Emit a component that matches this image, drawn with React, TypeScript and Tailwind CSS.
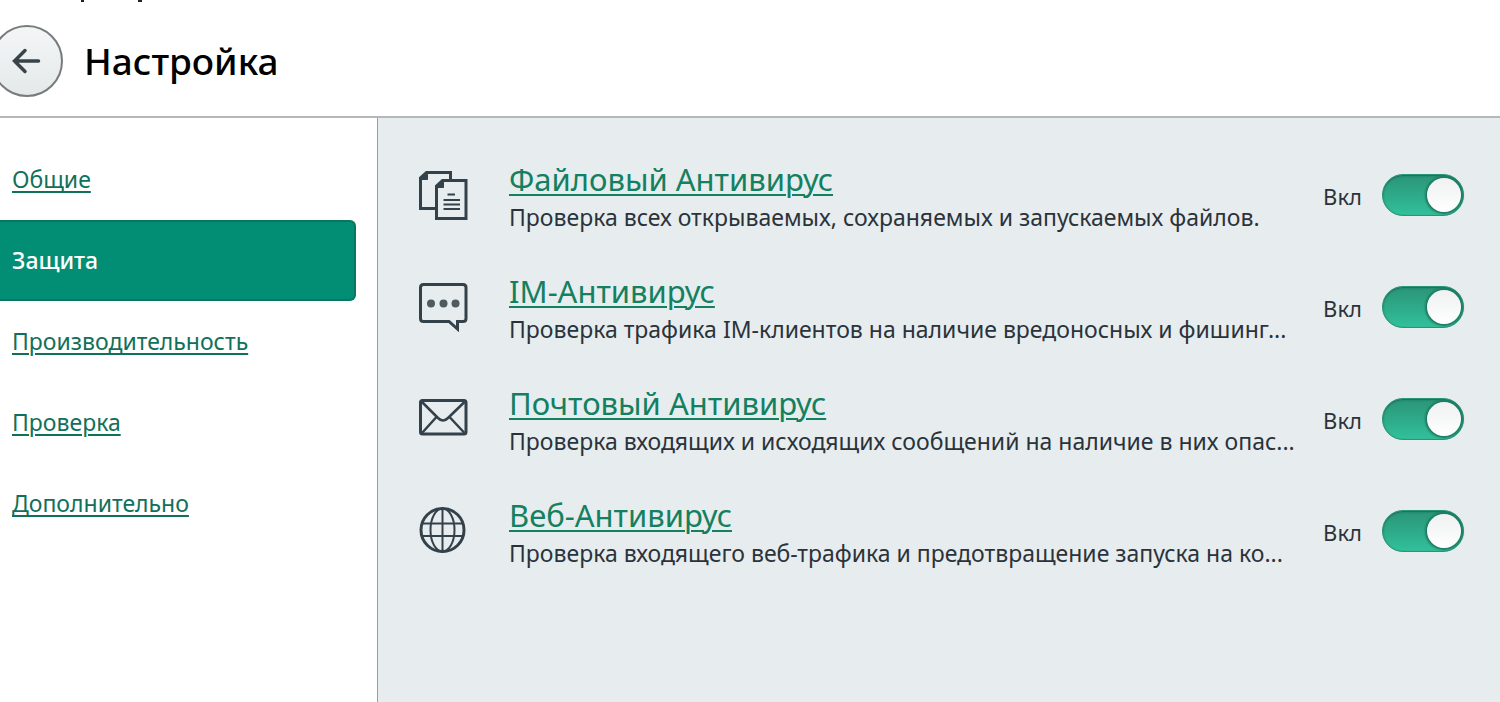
import React, { useState } from "react";

const TABS = ["Общие", "Защита", "Производительность", "Проверка", "Дополнительно"];

const FilesIcon = () => (
  <svg viewBox="0 0 50 50" className="w-[50px] h-[50px]" fill="none" stroke="currentColor" strokeWidth="3">
    <path d="M17 38.5H2.500V8L8.500 2.500H32.500V10" />
    <path d="M2 9.500H9.500V2Z" fill="currentColor" strokeWidth="1" />
    <path d="M18.500 16L24.500 10.500H48V48.500H18.500Z" />
    <path d="M18 17.500H25.500V10Z" fill="currentColor" strokeWidth="1" />
    <path d="M29.500 24.500H37M25.500 30H42M25.500 34.500H42M25.500 39H42" strokeWidth="2" />
  </svg>
);

const ChatIcon = () => (
  <svg viewBox="0 0 50 50" className="w-[50px] h-[50px]" fill="none" stroke="currentColor" strokeWidth="3">
    <path d="M5.500 2.500H45Q48 2.500 48 5.500V36.500Q48 39.500 45 39.500H39.500V47L31 39.500H5.500Q2.500 39.500 2.500 36.500V5.500Q2.500 2.500 5.500 2.500Z" />
    <g fill="#4f5b61" stroke="none">
      <circle cx="13" cy="21.500" r="4" />
      <circle cx="25.500" cy="21.500" r="4" />
      <circle cx="37.500" cy="21.500" r="4" />
    </g>
  </svg>
);

const MailIcon = () => (
  <svg viewBox="0 0 50 50" className="w-[50px] h-[50px]" fill="none" stroke="currentColor" strokeWidth="3">
    <rect x="2.500" y="6.500" width="45.500" height="33.500" rx="2" />
    <path d="M4 8L20 24Q25 29 30 24L46.500 8M4 39L18 23.500M46.500 39L32 23.500" strokeWidth="2.500" />
  </svg>
);

const GlobeIcon = () => (
  <svg viewBox="0 0 50 50" className="w-[50px] h-[50px]" fill="none" stroke="currentColor" strokeWidth="2">
    <circle cx="24.500" cy="24" r="21.500" strokeWidth="3" />
    <ellipse cx="24.500" cy="24" rx="12" ry="21.500" />
    <path d="M24.500 2V46M5 17.500H44M5 30H44" />
  </svg>
);

const COMPONENTS = [
  {
    id: "file",
    icon: <FilesIcon />,
    title: "Файловый Антивирус",
    text: "Проверка всех открываемых, сохраняемых и запускаемых файлов.",
  },
  {
    id: "im",
    icon: <ChatIcon />,
    title: "IM-Антивирус",
    text: "Проверка трафика IM-клиентов на наличие вредоносных и фишинг...",
  },
  {
    id: "mail",
    icon: <MailIcon />,
    title: "Почтовый Антивирус",
    text: "Проверка входящих и исходящих сообщений на наличие в них опас...",
  },
  {
    id: "web",
    icon: <GlobeIcon />,
    title: "Веб-Антивирус",
    text: "Проверка входящего веб-трафика и предотвращение запуска на ко...",
  },
];

const App = () => {
  const [activeTab, setActiveTab] = useState(1);
  const [enabled, setEnabled] = useState([true, true, true, true]);

  const toggle = (index: number) =>
    setEnabled(enabled.map((value, i) => (i === index ? !value : value)));

  return (
    <div className="min-h-screen flex flex-col bg-white font-['Noto_Sans',sans-serif] text-[#2b333a]">
      {/* Marks at the window's top edge */}
      <div className="h-[2px] flex gap-[54px] pl-[81px]">
        <span className="w-[3px] bg-[#222222]" />
        <span className="w-1 bg-[#222222]" />
      </div>

      {/* Header */}
      <header className="h-[116px] flex items-center gap-[21px] pt-1 border-b-2 border-[#b4b8ba]">
        <button
          aria-label="Назад"
          className="w-[72px] h-[72px] -ml-[9px] rounded-full border-2 border-[#777b7d] bg-linear-to-b from-[#f4f6f6] to-[#e4e9ea] flex items-center justify-center"
        >
          <svg viewBox="0 0 30 26" className="w-[30px] h-[26px]" fill="none" stroke="#38444a" strokeWidth="3.500" strokeLinecap="round">
            <path d="M26.500 13H2.500M13 2.500L2.500 13L13 23.500" />
          </svg>
        </button>
        <h1 className="text-[37px] leading-[48px] font-medium text-black">Настройка</h1>
      </header>

      <div className="flex-1 flex">
        {/* Tabs */}
        <nav className="w-[378px] shrink-0 pt-[21px] pr-[21px] border-r border-[#969fa2] text-[23px]">
          {TABS.map((tab, i) => (
            <a
              key={tab}
              href="#"
              onClick={() => setActiveTab(i)}
              className={`flex items-center h-[81px] pl-3 ${
                activeTab === i
                  ? "bg-[#028e74] border-y-2 border-r-2 border-[#0a7560] rounded-r-md text-white font-medium"
                  : "text-[#11705a] underline underline-offset-3 decoration-2"
              }`}
            >
              {tab}
            </a>
          ))}
        </nav>

        {/* Protection components */}
        <main className="flex-1 min-w-0 bg-[#e7ecef] pt-10 pl-10 pr-9">
          {COMPONENTS.map((item, i) => (
            <section key={item.id} className="h-28 flex items-start">
              <div className="w-[91px] pt-3 shrink-0 text-[#33424a]">{item.icon}</div>
              <div className="flex-1 min-w-0">
                <h2 className="text-[31px] leading-[42px]">
                  <a href="#" className="text-[#13805f] underline underline-offset-3 decoration-2">
                    {item.title}
                  </a>
                </h2>
                <p className="text-[23px] leading-[34px] truncate">{item.text}</p>
              </div>
              <div className="shrink-0 flex items-center gap-5 pt-4">
                <label htmlFor={item.id} className="pt-[2px] text-[22px]">
                  {enabled[i] ? "Вкл" : "Выкл"}
                </label>
                <input
                  id={item.id}
                  type="checkbox"
                  checked={enabled[i]}
                  onChange={() => toggle(i)}
                  className="appearance-none w-[82px] h-[42px] rounded-full px-[2px] flex items-center justify-start checked:justify-end bg-[#a5adb0] checked:bg-linear-to-b checked:from-[#2a9577] checked:to-[#31c09a] border border-[#2a9578] shadow-[inset_0_1px_2px_#1b6b57] before:block before:w-[34px] before:h-[34px] before:rounded-full before:bg-linear-to-b before:from-[#eef2f0] before:to-white before:shadow-[0_0_2px_2px_#1d7a61]"
                />
              </div>
            </section>
          ))}
        </main>
      </div>
    </div>
  );
};

export default App;
